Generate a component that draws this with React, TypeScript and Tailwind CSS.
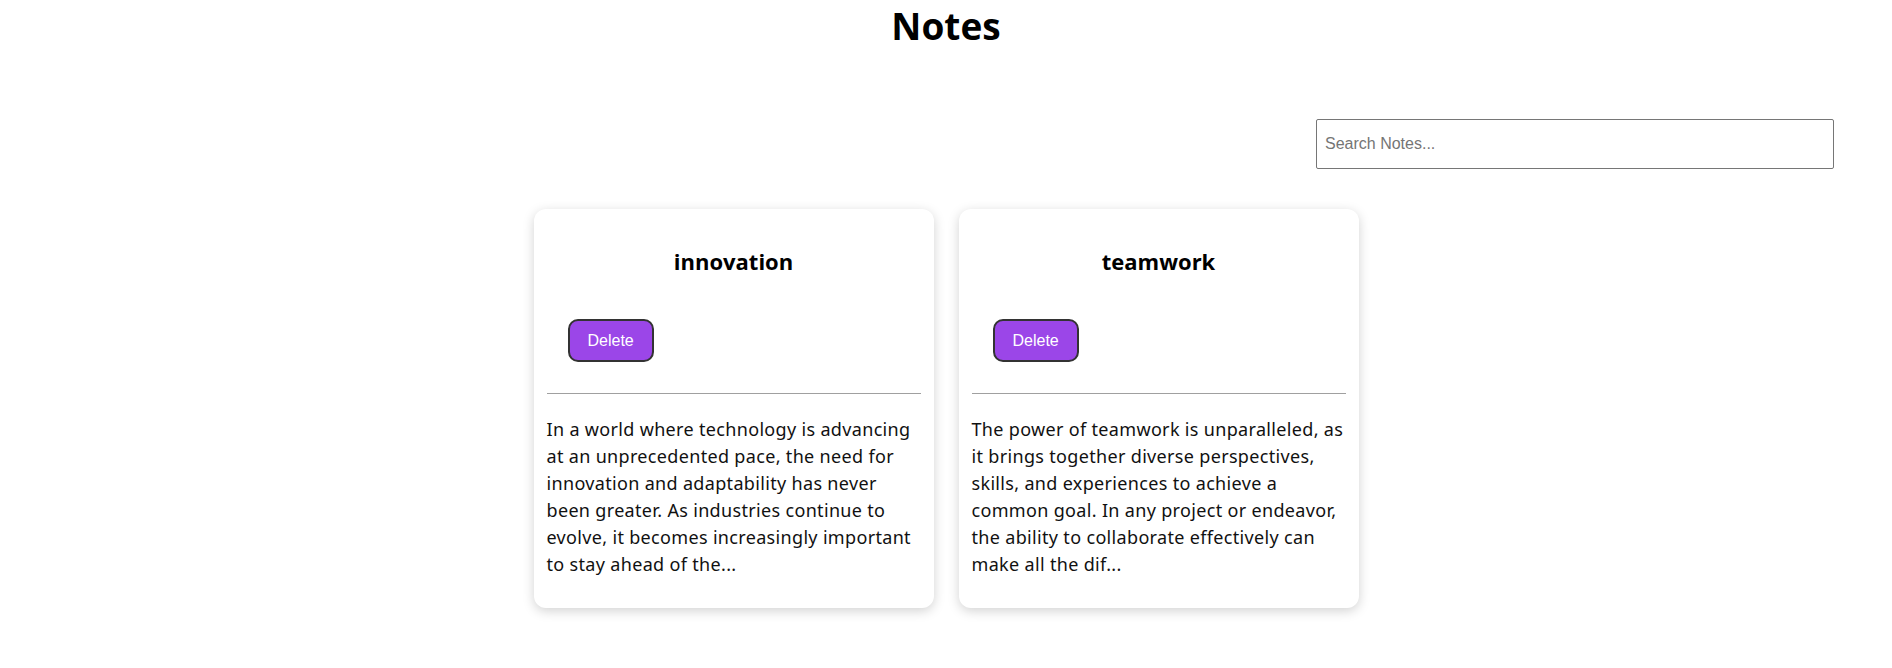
import { useState } from 'react';

const notes = [
  {
    title: 'innovation',
    body: 'In a world where technology is advancing at an unprecedented pace, the need for innovation and adaptability has never been greater. As industries continue to evolve, it becomes increasingly important to stay ahead of the...',
  },
  {
    title: 'teamwork',
    body: 'The power of teamwork is unparalleled, as it brings together diverse perspectives, skills, and experiences to achieve a common goal. In any project or endeavor, the ability to collaborate effectively can make all the dif...',
  },
];

export default function App() {
  const [query, setQuery] = useState('');
  const shown = notes.filter((n) => n.title.includes(query.toLowerCase()));

  return (
    <div className="min-h-screen bg-white text-black font-['Open_Sans',sans-serif]">
      <h1 className="pt-[3px] text-center text-[37px] leading-[46px] font-bold">Notes</h1>

      <div className="mt-[70px] flex justify-end pr-[58px]">
        <input
          value={query}
          onChange={(e) => setQuery(e.target.value)}
          placeholder="Search Notes..."
          className="h-[50px] w-[518px] rounded-[2px] border border-[#767676] px-2 font-['Liberation_Sans',Arial,sans-serif] text-base placeholder:text-[#757575] outline-none"
        />
      </div>

      <div className="mt-[40px] flex flex-wrap justify-center gap-[25px]">
        {shown.map((note) => (
          <div
            key={note.title}
            className="w-[400px] rounded-xl bg-white px-[13px] pt-[36px] pb-[30px] shadow-[0_3px_12px_rgba(0,0,0,0.18)]"
          >
            <h2 className="text-center text-[22px] leading-8 font-bold">{note.title}</h2>
            <button className="mt-[42px] ml-[21px] rounded-[10px] border-2 border-[#333] bg-[#9b46e8] px-[18px] py-[10px] font-['Liberation_Sans',Arial,sans-serif] text-base leading-[19px] text-white">
              Delete
            </button>
            <hr className="mt-[31px] border-t border-[#a0a0a0]" />
            <p className="mt-[22px] font-['Noto_Sans',sans-serif] text-[18px] leading-[27px] tracking-[0.33px] text-[#111]">{note.body}</p>
          </div>
        ))}
      </div>
    </div>
  );
}
